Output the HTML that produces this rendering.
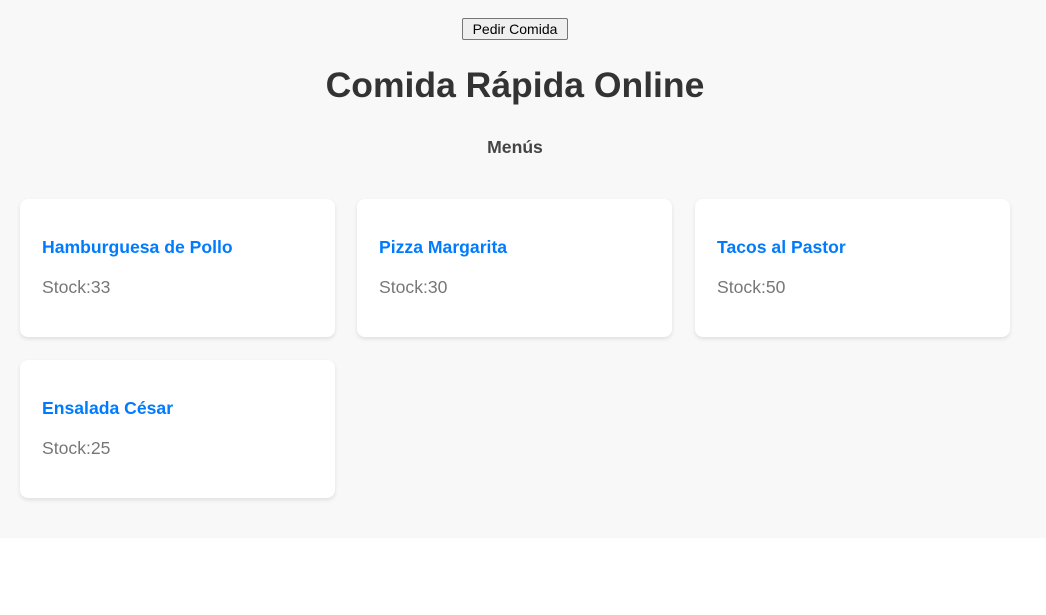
<!DOCTYPE html>
<html><head><style>
body{margin:0;background:#fff;font-family:"Liberation Sans",Arial,sans-serif;}
.wrap{background:#f8f8f8;height:538px;position:relative;}
button{position:absolute;left:462px;top:18px;width:106px;height:22px;font:14px "Liberation Sans",Arial,sans-serif;background:#efefef;border:1px solid #767676;border-radius:2px;padding:0;color:#000;}
h1{position:absolute;top:64px;left:0;width:1030px;margin:0;text-align:center;font-size:35.5px;color:#333;line-height:42px;}
h2{position:absolute;top:137px;left:0;width:1030px;margin:0;text-align:center;font-size:17.6px;color:#444;line-height:21px;}
.card{position:absolute;width:315px;height:138px;background:#fff;border-radius:8px;box-shadow:0 2px 4px rgba(0,0,0,0.1);}
.card h3{position:absolute;left:22px;top:38px;margin:0;font-size:17.6px;color:#007bff;line-height:21px;}
.card p{position:absolute;left:22px;top:78px;margin:0;font-size:17.6px;color:#777;line-height:21px;}
</style></head><body><div class="wrap">
<button>Pedir Comida</button>
<h1>Comida Rápida Online</h1>
<h2>Menús</h2>
<div class="card" style="left:20px;top:199px"><h3>Hamburguesa de Pollo</h3><p>Stock:33</p></div>
<div class="card" style="left:357px;top:199px"><h3>Pizza Margarita</h3><p>Stock:30</p></div>
<div class="card" style="left:695px;top:199px"><h3>Tacos al Pastor</h3><p>Stock:50</p></div>
<div class="card" style="left:20px;top:360px"><h3>Ensalada César</h3><p>Stock:25</p></div>
</div></body></html>
